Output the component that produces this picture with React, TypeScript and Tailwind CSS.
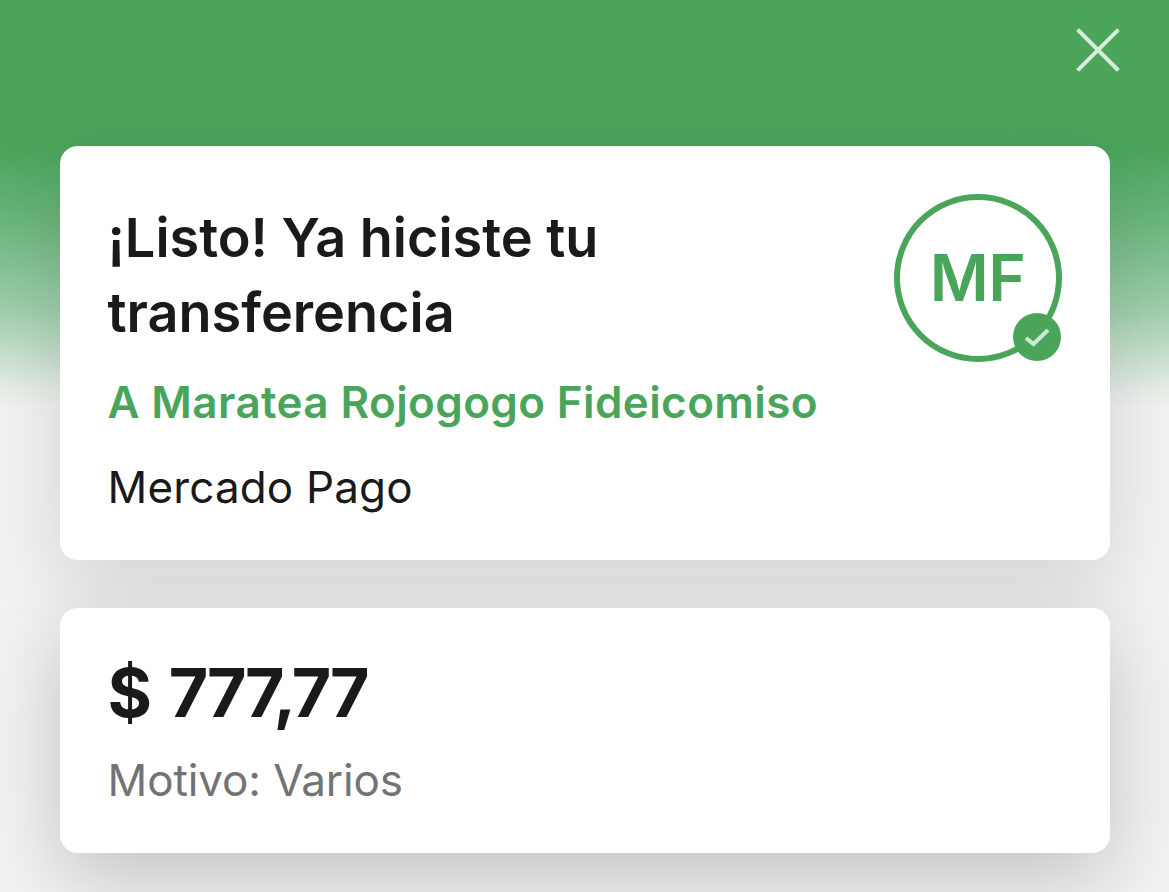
export default function App() {
  return (
    <div className="relative h-[892px] w-full overflow-hidden bg-[linear-gradient(to_bottom,#4aa55b_0px,#4aa55b_150px,#6bb67c_222px,#a3d0ae_315px,#e9eeea_392px,#f2f2f2_410px)] font-['Inter',sans-serif]">
      <div className="flex h-[146px] items-start justify-end pr-[49px] pt-[28px]">
        <svg width="44" height="44" viewBox="0 0 44 44" fill="none" stroke="#d6eddb" strokeWidth="4" strokeLinecap="square">
          <path d="M3 3 L41 41 M41 3 L3 41" />
        </svg>
      </div>
      <div className="flex flex-col gap-[48px] px-[59.5px]">
        <section className="flex h-[414px] items-start justify-between rounded-[18px] bg-white pl-[48px] pr-[48px] pt-[54px] shadow-[0_24px_80px_rgba(0,0,0,0.13)]">
          <div className="flex flex-col">
            <h1 className="text-[54px] font-semibold leading-[75px] text-[#1a1a1a]">
              ¡Listo! Ya hiciste tu
              <br />
              transferencia
            </h1>
            <p className="mt-[22px] text-[44px] font-semibold leading-[60px] tracking-[0.38px] text-[#4aa55b]">A Maratea Rojogogo Fideicomiso</p>
            <p className="mt-[25px] text-[44px] leading-[60px] tracking-[0.15px] text-[#1a1a1a]">Mercado Pago</p>
          </div>
          <div className="relative mt-[-6px] flex h-[168px] w-[168px] items-center justify-center rounded-full border-[6px] border-[#4aa55b]">
            <span className="text-[64px] font-semibold leading-none tracking-[-0.5px] text-[#4aa55b]">MF</span>
            <div className="absolute bottom-[-5px] right-[-5px] flex h-[48px] w-[48px] items-center justify-center rounded-full bg-[#4aa55b]">
              <svg width="26" height="20" viewBox="0 0 26 20" fill="none" stroke="#cdead4" strokeWidth="4">
                <path d="M2 11 L9.5 17 L24 3" />
              </svg>
            </div>
          </div>
        </section>
        <section className="flex h-[245px] flex-col rounded-[18px] bg-white px-[48px] pt-[44px] shadow-[0_24px_80px_rgba(0,0,0,0.2)]">
          <p className="text-[68px] font-bold leading-[80px] tracking-[-2.7px] text-[#1a1a1a] [word-spacing:6px]">$ 777,77</p>
          <p className="mt-[18px] text-[44px] leading-[60px] tracking-[-0.1px] text-[#737373]">Motivo: Varios</p>
        </section>
      </div>
    </div>
  );
}
